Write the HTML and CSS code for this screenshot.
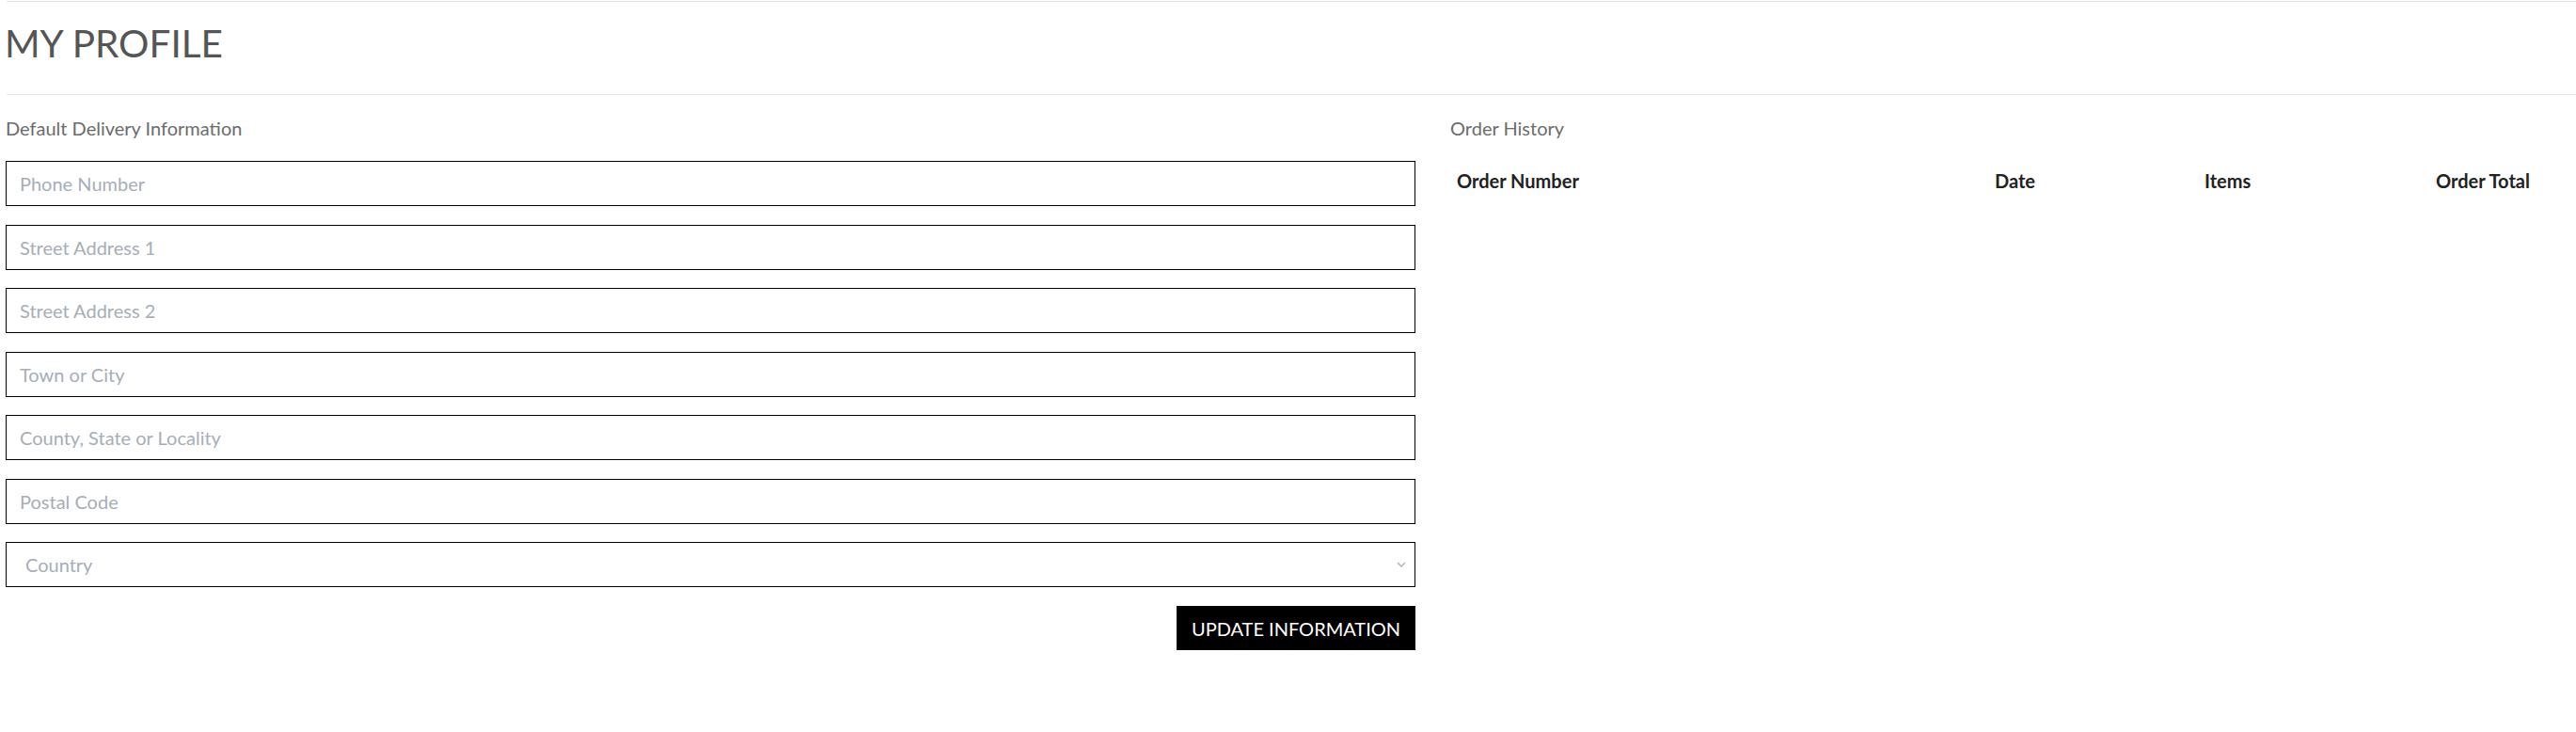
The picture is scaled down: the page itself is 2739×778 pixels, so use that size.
FILE: index.html
```html
<!DOCTYPE html>
<html lang="en">
<head>
<meta charset="utf-8">
<title>My Profile</title>
<link rel="stylesheet" href="styles.css">
</head>
<body>
<div class="page">
  <hr class="rule rule-top">
  <h1 class="page-title">My Profile</h1>
  <hr class="rule rule-mid">
  <div class="content">
    <section class="col-left">
      <p class="section-label">Default Delivery Information</p>
      <form class="delivery-form">
        <input class="field" type="text" placeholder="Phone Number">
        <input class="field" type="text" placeholder="Street Address 1">
        <input class="field" type="text" placeholder="Street Address 2">
        <input class="field" type="text" placeholder="Town or City">
        <input class="field" type="text" placeholder="County, State or Locality">
        <input class="field" type="text" placeholder="Postal Code">
        <div class="select-wrap">
          <select class="field field-select">
            <option>Country</option>
          </select>
          <svg class="chevron" width="10" height="6" viewBox="0 0 10 6" aria-hidden="true"><path d="M1 1 L5 5 L9 1" fill="none" stroke="#a9b1ba" stroke-width="1.4"/></svg>
        </div>
        <div class="actions">
          <button type="button" class="btn-update">Update Information</button>
        </div>
      </form>
    </section>
    <section class="col-right">
      <p class="section-label">Order History</p>
      <table class="orders">
        <colgroup>
          <col class="c1"><col class="c2"><col class="c3"><col class="c4">
        </colgroup>
        <thead>
          <tr>
            <th>Order Number</th>
            <th>Date</th>
            <th>Items</th>
            <th>Order Total</th>
          </tr>
        </thead>
        <tbody></tbody>
      </table>
    </section>
  </div>
</div>
</body>
</html>
```
FILE: styles.css
```css
* { box-sizing: border-box; }

html, body {
  margin: 0;
  padding: 0;
  background: #fff;
}

body {
  font-family: Lato, "Open Sans", "Liberation Sans", sans-serif;
  color: #222;
}

.page {
  padding-left: 6px;
}

.rule {
  border: 0;
  border-top: 1px solid #e3e3e3;
  margin: 0 0 0 1px;
  height: 0;
}

.rule-top {
  margin-top: 1px;
}

.page-title {
  margin: 19px 0 0 -1px;
  font-size: 40.5px;
  line-height: 50px;
  font-weight: 400;
  color: #555;
  text-transform: uppercase;
}

.rule-mid {
  margin-top: 29px;
}

.content {
  display: grid;
  grid-template-columns: 1499px 1fr;
  column-gap: 37px;
}

.section-label {
  margin: 23px 0 0;
  font-size: 20px;
  line-height: 25px;
  color: #6c6c6c;
}

.delivery-form {
  margin-top: 22px;
  display: flex;
  flex-direction: column;
  gap: 19.5px;
}

.field {
  display: block;
  width: 100%;
  height: 48px;
  border: 1px solid #000;
  border-radius: 0;
  padding: 0 14px;
  font-family: Lato, "Open Sans", "Liberation Sans", sans-serif;
  font-size: 20px;
  color: #333;
  background: #fff;
  outline: none;
}

.field::placeholder {
  color: #a6aeb8;
  opacity: 1;
}

.select-wrap {
  position: relative;
}

.field-select {
  appearance: none;
  -webkit-appearance: none;
  padding-left: 20px;
  color: #a6aeb8;
}

.chevron {
  position: absolute;
  right: 10px;
  top: 21px;
  pointer-events: none;
}

.actions {
  display: flex;
  justify-content: flex-end;
  margin-top: 0.5px;
}

.btn-update {
  height: 47px;
  width: 254px;
  border: 0;
  border-radius: 0;
  background: #000;
  color: #fff;
  font-family: Lato, "Open Sans", "Liberation Sans", sans-serif;
  font-size: 20px;
  text-transform: uppercase;
  padding: 0;
  cursor: pointer;
}

.orders {
  margin-top: 16px;
  width: 1157px;
  border-collapse: collapse;
  table-layout: fixed;
}

.orders .c1 { width: 572px; }
.orders .c2 { width: 223px; }
.orders .c3 { width: 246px; }
.orders .c4 { width: 116px; }

.orders th {
  text-align: left;
  font-size: 20px;
  line-height: 27px;
  font-weight: 700;
  color: #222;
  padding: 14px 0 14px 7px;
  white-space: nowrap;
}
```
